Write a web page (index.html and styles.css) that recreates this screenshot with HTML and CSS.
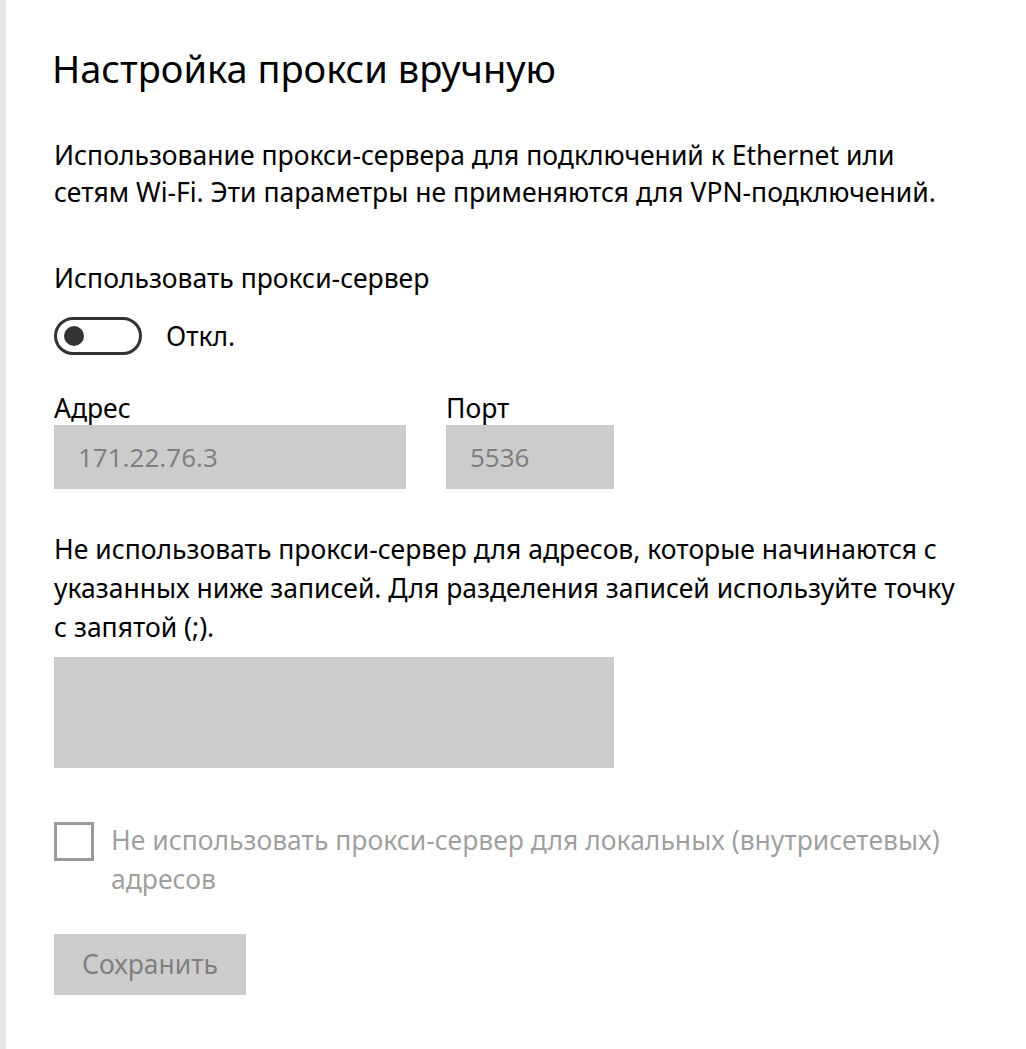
FILE: index.html
```
<!DOCTYPE html>
<html lang="ru">
<head>
<meta charset="utf-8">
<title>Настройка прокси вручную</title>
<link rel="stylesheet" href="styles.css">
</head>
<body>
<div class="page">
  <h1 class="title">Настройка прокси вручную</h1>
  <p class="desc">Использование прокси-сервера для подключений к Ethernet или<br>сетям Wi-Fi. Эти параметры не применяются для VPN-подключений.</p>
  <div class="label">Использовать прокси-сервер</div>
  <div class="toggle-row">
    <span class="toggle"><span class="knob"></span></span>
    <span class="toggle-text">Откл.</span>
  </div>
  <div class="fields">
    <div class="field field-addr">
      <div class="field-label">Адрес</div>
      <div class="input">171.22.76.3</div>
    </div>
    <div class="field field-port">
      <div class="field-label">Порт</div>
      <div class="input">5536</div>
    </div>
  </div>
  <p class="desc2">Не использовать прокси-сервер для адресов, которые начинаются с<br>указанных ниже записей. Для разделения записей используйте точку<br>с запятой (;).</p>
  <div class="textarea"></div>
  <div class="check-row">
    <span class="checkbox"></span>
    <span class="check-text">Не использовать прокси-сервер для локальных (внутрисетевых)<br>адресов</span>
  </div>
  <div class="button">Сохранить</div>
</div>
</body>
</html>
```
FILE: styles.css
```
html, body {
  margin: 0;
  padding: 0;
  background: #ffffff;
}

body {
  font-family: "Noto Sans", "Open Sans", "DejaVu Sans", sans-serif;
  color: #000000;
}

.page {
  min-height: 1049px;
  box-sizing: border-box;
  border-left: 6px solid #e6e6e6;
  padding: 46px 0 0 48px;
}

.title {
  margin: 0;
  font-size: 38px;
  font-weight: 400;
  line-height: 44px;
  margin-left: -2px;
}

.desc {
  margin: 47px 0 0;
  font-size: 26.5px;
  line-height: 37px;
}

.label {
  margin-top: 49px;
  font-size: 26.5px;
  line-height: 37px;
}

.toggle-row {
  margin-top: 20px;
  display: flex;
  align-items: center;
  height: 38px;
}

.toggle {
  box-sizing: border-box;
  width: 88px;
  height: 38px;
  border: 3px solid #333333;
  border-radius: 19px;
  display: flex;
  align-items: center;
  padding-left: 7px;
}

.knob {
  width: 20px;
  height: 20px;
  border-radius: 50%;
  background: #333333;
}

.toggle-text {
  margin-left: 24px;
  font-size: 26.5px;
  line-height: 37px;
}

.fields {
  margin-top: 36px;
  display: flex;
  gap: 40px;
}

.field-label {
  font-size: 26.5px;
  line-height: 34px;
}

.input {
  box-sizing: border-box;
  height: 64px;
  background: #cccccc;
  color: rgba(0, 0, 0, 0.4);
  font-size: 26px;
  line-height: 64px;
  padding-left: 24px;
}

.field-addr .input {
  width: 352px;
}

.field-port .input {
  width: 168px;
}

.desc2 {
  margin: 41px 0 0;
  font-size: 26.5px;
  line-height: 39px;
}

.textarea {
  margin-top: 10px;
  width: 560px;
  height: 111px;
  background: #cccccc;
}

.check-row {
  margin-top: 54px;
  display: flex;
  align-items: flex-start;
}

.checkbox {
  box-sizing: border-box;
  flex: none;
  width: 40px;
  height: 39px;
  border: 3px solid rgba(0, 0, 0, 0.4);
}

.check-text {
  margin-left: 17px;
  margin-top: -1px;
  font-size: 26.5px;
  line-height: 39px;
  color: rgba(0, 0, 0, 0.4);
}

.button {
  margin-top: 35px;
  width: 192px;
  height: 61px;
  background: #cccccc;
  color: rgba(0, 0, 0, 0.4);
  font-size: 26.5px;
  line-height: 61px;
  text-align: center;
}
```
